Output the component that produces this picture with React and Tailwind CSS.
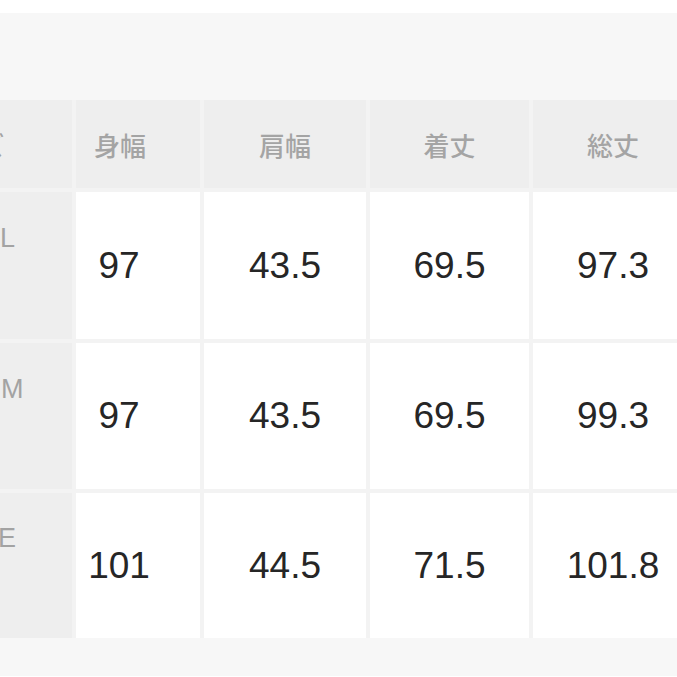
const headers = ["身幅", "肩幅", "着丈", "総丈"];

const rows = [
  { label: "L", shift: "ml-0", values: ["97", "43.5", "69.5", "97.3"], h: "h-[147px]" },
  { label: "M", shift: "ml-[1px]", values: ["97", "43.5", "69.5", "99.3"], h: "h-[146px]" },
  { label: "E", shift: "ml-[-2px]", values: ["101", "44.5", "71.5", "101.8"], h: "h-[145px]" },
];

const numFont = { fontFamily: '"Liberation Sans", Arial, sans-serif' };
const jpFont = { fontFamily: '"Noto Sans CJK JP", "Noto Sans", sans-serif' };

export default function App() {
  return (
    <div className="w-[677px] h-[677px] overflow-hidden bg-white">
      <div className="mt-[13px] h-[663px] w-[720px] bg-[#f7f7f7] pt-[87px]">
        <div className="grid grid-cols-[72px_124px_162px_159px_160px] gap-[4px] bg-[#f3f3f3]">
          {/* header row */}
          <div className="h-[88px] bg-[#eeeeee] flex items-center overflow-hidden">
            <span
              className="ml-[-73px] whitespace-nowrap text-[26px] font-medium text-[#a4a4a4]"
              style={jpFont}
            >
              サイズ
            </span>
          </div>
          {headers.map((h, i) => (
            <div
              key={h}
              className={
                "h-[88px] bg-[#eeeeee] flex items-center justify-center " +
                (i === 0 ? "pr-[36px]" : "")
              }
            >
              <span className="text-[26px] font-medium text-[#a4a4a4]" style={jpFont}>
                {h}
              </span>
            </div>
          ))}

          {/* data rows */}
          {rows.map((r) => (
            <Row key={r.label} row={r} />
          ))}
        </div>
      </div>
    </div>
  );
}

function Row({ row }) {
  return (
    <>
      <div className={row.h + " bg-[#eeeeee] flex items-center pb-[54px] overflow-hidden"}>
        <span className={row.shift + " text-[27px] text-[#a3a3a3]"} style={numFont}>
          {row.label}
        </span>
      </div>
      {row.values.map((v, i) => (
        <div
          key={i}
          className={
            row.h +
            " bg-white flex items-center justify-center " +
            (i === 0 ? "pr-[38px]" : "")
          }
        >
          <span className="text-[37px] text-[#262626]" style={numFont}>
            {v}
          </span>
        </div>
      ))}
    </>
  );
}
